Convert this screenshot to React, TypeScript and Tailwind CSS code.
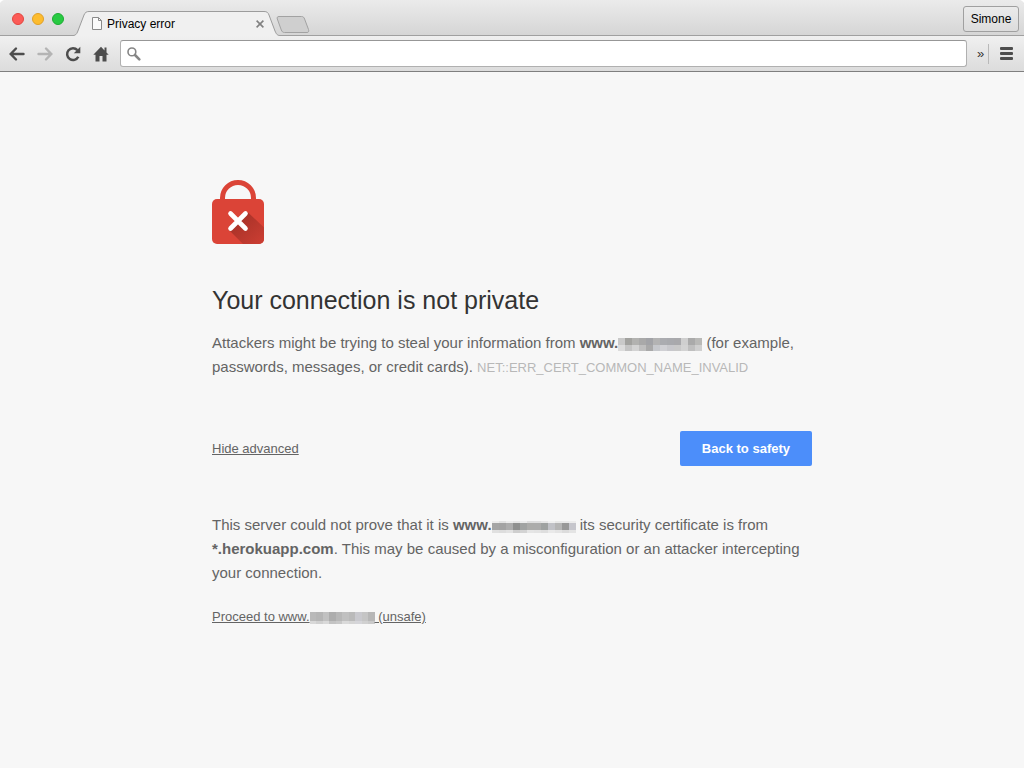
import { clsx } from "clsx";

const trafficLights = [
  { label: "Close window", color: "bg-[#fc5b57] border-[#e2463f]" },
  { label: "Minimize window", color: "bg-[#fdbc2e] border-[#e0a028]" },
  { label: "Zoom window", color: "bg-[#28ca42] border-[#1dab33]" },
];

// Rows of grey blocks that cover the host names
const attackMosaic = [
  { height: "h-[7px]", cells: ["#c9c9c9", "#a2a29f", "#b2b2b0", "#a9a9a9", "#a2a3a7", "#b3b3b3", "#abacb0", "#a9aaae", "#a9a9ac", "#cfcfcf", "#aaaaaa", "#b9b9b7"] },
  { height: "h-[6px]", cells: ["#dcdcdc", "#c4c4c4", "#d3d3d3", "#bfbfbf", "#a9a9a9", "#c6c8cc", "#d0d0d4", "#c8c8cc", "#c9c9c9", "#d3d3d3", "#bfbfbf", "#cfcfcf"] },
];
const serverMosaic = [
  { height: "h-[2px]", cells: ["#ececec", "#e2e2e2", "#ececec", "#e6e6e6", "#ececec", "#dedede", "#dfdfdf", "#e6e6e6", "#f0f0f0", "#e8e8e8", "#e9e9e9", "#ececec"] },
  { height: "h-[7px]", cells: ["#a5a5a5", "#a3a3a3", "#adadad", "#8f908f", "#a1a3a2", "#acacaa", "#acacab", "#9fa2a1", "#c1c2c7", "#b5b5b5", "#989898", "#c6c6cc"] },
  { height: "h-[3px]", cells: ["#e0e0e0", "#dddddd", "#e2e2e2", "#cecece", "#d3d3d3", "#e5e5e5", "#e3e3e3", "#dedede", "#e9e9e9", "#e4e4e4", "#dcdcdc", "#e4e4e4"] },
];
const proceedMosaic = [
  { height: "h-[9px]", cells: ["#b9b9b9", "#b5b5b5", "#c1c1c1", "#adadad", "#b7b7b7", "#c0c0c0", "#bababa", "#c9c9ce", "#c5c5c5", "#b7b7b7"] },
  { height: "h-[3px]", cells: ["#d8d8d8", "#d0d0d0", "#d9d9d9", "#c3c3c3", "#c8c8c8", "#dadada", "#d5d5d5", "#d5d5d9", "#d0d0d0", "#cacaca"] },
];

type MosaicRow = { height: string; cells: string[] };

function Redacted({ rows, className }: { rows: MosaicRow[]; className: string }) {
  return (
    <span className={clsx("inline-flex flex-col align-text-bottom", className)} role="img" aria-label="hidden host name">
      {rows.map((row, index) => (
        <span key={index} className={clsx("flex", row.height)}>
          {row.cells.map((color, cell) => (
            <span key={cell} className="flex-1" style={{ backgroundColor: color }} />
          ))}
        </span>
      ))}
    </span>
  );
}

function ActiveTab() {
  return (
    <div className="relative w-[206px] h-[25px] pl-[17px] pr-[14px] flex items-center">
      <svg className="absolute inset-0 w-full h-full" viewBox="0 0 206 25" preserveAspectRatio="none" aria-hidden="true">
        <path d="M-1 24.5C1.5 24.5 2.5 23.2 3.500 21L10 4C11 1.500 12.500 .5 15 .5H190C193 .5 194 1.500 195 4L201 20C202.500 23.500 203.500 24.500 206 24.500V25H0Z" fill="#f0f0f0" />
        <path d="M-1 24.5C1.5 24.5 2.5 23.2 3.500 21L10 4C11 1.500 12.500 .5 15 .5H190C193 .5 194 1.500 195 4L201 20C202.500 23.500 203.500 24.500 206 24.500" fill="none" stroke="#9c9c9c" />
      </svg>
      <svg className="relative w-3 h-[15px]" viewBox="0 0 12 15" aria-hidden="true">
        <path d="M1.500 1.500H7.500L10.500 4.500V13.500H1.500Z" fill="#fafafa" stroke="#8a8a8a" />
        <path d="M7.500 1.500V4.500H10.500" fill="none" stroke="#8a8a8a" />
      </svg>
      <span className="relative flex-1 ml-1 text-xs text-black">Privacy error</span>
      <button className="relative w-3 h-3 flex items-center justify-center" aria-label="Close tab">
        <svg className="w-2 h-2" viewBox="0 0 8 8" stroke="#808080" strokeWidth="1.600">
          <path d="M.6 .6L7.400 7.400M7.400 .6L.6 7.400" />
        </svg>
      </button>
    </div>
  );
}

function TabStrip() {
  return (
    <div className="h-9 pl-3 pr-[5px] flex items-end rounded-t-[5px] bg-gradient-to-b from-[#ebebeb] to-[#d5d5d5] shadow-[inset_0_-1px_0_#a0a0a0]">
      <div className="h-full w-[62px] pt-[13px] flex gap-2">
        {trafficLights.map((light) => (
          <button key={light.label} aria-label={light.label} className={clsx("w-3 h-3 rounded-full border", light.color)} />
        ))}
      </div>
      <ActiveTab />
      <button className="-ml-1 mb-[3px] w-[34px] h-[17px]" aria-label="New tab">
        <svg className="w-full h-full" viewBox="0 0 34 17">
          <path d="M3 .5H25.500C27.500 .5 28 1.500 28.600 3L32.500 13.500C33.200 15.500 32.500 16.500 31 16.500H8.500C6.500 16.500 6 15.500 5.300 14L1.300 3C.8 1.500 1.300 .5 3 .5Z" fill="#cfcfcf" stroke="#a2a2a2" />
        </svg>
      </button>
      <button className="ml-auto mb-1 h-[26px] w-14 rounded-[3px] border border-[#a0a0a0] bg-gradient-to-b from-[#ebebeb] to-[#dcdcdc] text-xs text-black">
        Simone
      </button>
    </div>
  );
}

function Toolbar() {
  return (
    <div className="h-9 px-[9px] flex items-center bg-gradient-to-b from-[#f0f0f0] to-[#dcdcdc] border-b border-[#7f7f7f]">
      <div className="flex gap-3">
        <button aria-label="Back">
          <svg className="w-4 h-4" viewBox="0 0 16 16" fill="none" stroke="#4d4d4d" strokeWidth="2.400" strokeLinecap="round">
            <path d="M7 2.500L1.700 8L7 13.500M2.500 8H14.500" />
          </svg>
        </button>
        <button aria-label="Forward" disabled>
          <svg className="w-4 h-4" viewBox="0 0 16 16" fill="none" stroke="#b4b4b4" strokeWidth="2.400" strokeLinecap="round">
            <path d="M9 2.500L14.300 8L9 13.500M13.500 8H1.500" />
          </svg>
        </button>
        <button aria-label="Reload">
          <svg className="w-4 h-4" viewBox="0 0 16 16">
            <path d="M12.400 4.200A5.900 5.900 0 1 0 13.300 10.800" fill="none" stroke="#4d4d4d" strokeWidth="2.500" />
            <path d="M15.300 .8V7.300H8.800Z" fill="#4d4d4d" />
          </svg>
        </button>
        <button aria-label="Home">
          <svg className="w-4 h-4" viewBox="0 0 16 16" fill="#4d4d4d">
            <path d="M8 .8L.3 8.800H2.500V15.500H6.500V10H9.500V15.500H13.500V8.800H15.700L13.500 6.500V1.500H11.500V4.400Z" />
          </svg>
        </button>
      </div>
      <label className="ml-[11px] flex-1 h-[27px] px-[6px] flex items-center gap-2 bg-white rounded-[3px] border border-[#b0b0b0] border-t-[#979797]">
        <svg className="w-[14px] h-[14px]" viewBox="0 0 14 14" fill="none" stroke="#858585" aria-hidden="true">
          <circle cx="4.900" cy="4.900" r="3.900" strokeWidth="1.600" />
          <path d="M8 8L12.300 12.300" strokeWidth="2.600" strokeLinecap="round" />
        </svg>
        <input type="text" aria-label="Address" className="flex-1 min-w-0 text-sm outline-none" />
      </label>
      <button className="ml-[10px] w-3 h-5 border-r border-[#b9b9b9] text-left text-[13px] leading-[18px] text-[#333]" aria-label="More">
        »
      </button>
      <button className="ml-[11px] w-[15px] flex flex-col gap-[2px]" aria-label="Menu">
        <span className="w-[13px] h-[3px] rounded-[1px] bg-[#4d4d4d]" />
        <span className="w-[13px] h-[3px] rounded-[1px] bg-[#4d4d4d]" />
        <span className="w-[13px] h-[3px] rounded-[1px] bg-[#4d4d4d]" />
      </button>
    </div>
  );
}

function BrokenLock() {
  return (
    <svg className="w-[52px] h-16" viewBox="0 0 52 64" aria-hidden="true">
      <defs>
        <linearGradient id="lock-shadow" x1="26" y1="38" x2="48" y2="62" gradientUnits="userSpaceOnUse">
          <stop offset="0" stopColor="#a83228" />
          <stop offset="1" stopColor="#c93d32" />
        </linearGradient>
      </defs>
      <path d="M10.500 22V18A15.500 15.500 0 0 1 41.500 18V22" fill="none" stroke="#db4437" strokeWidth="5" />
      <rect y="19" width="52" height="45" rx="5" fill="#db4437" />
      <path d="M35.500 32L52 47.500V59A5 5 0 0 1 47 64H31L17 50L26 41Z" fill="url(#lock-shadow)" />
      <path d="M18.500 33.500L33.500 48.500M33.500 33.500L18.500 48.500" stroke="#fff" strokeWidth="4.600" strokeLinecap="round" />
    </svg>
  );
}

export default function App() {
  return (
    <div className="min-h-screen rounded-t-[5px] bg-[#f7f7f7] font-['Liberation_Sans',Arial,sans-serif]">
      <header>
        <TabStrip />
        <Toolbar />
      </header>
      <main className="w-full max-w-[600px] mx-auto pt-[108px] text-[15px] leading-6 text-[#646464]">
        <BrokenLock />
        <h1 className="mt-10 text-[25px] leading-8 text-[#333]">Your connection is not private</h1>
        <p className="mt-[15px]">
          Attackers might be trying to steal your information from <strong>www.</strong>
          <Redacted rows={attackMosaic} className="w-[84px]" /> (for example, passwords, messages, or credit cards).{" "}
          <span className="text-[13px] text-[#b8b8b8]">NET::ERR_CERT_COMMON_NAME_INVALID</span>
        </p>
        <div className="mt-[51px] flex items-center justify-between">
          <button className="text-[13px] underline">Hide advanced</button>
          <button className="h-[35px] px-[22px] rounded-[2px] bg-[#4c8efa] text-[13px] font-bold text-white">Back to safety</button>
        </div>
        <p className="mt-[47px]">
          This server could not prove that it is <strong>www.</strong>
          <Redacted rows={serverMosaic} className="w-[84px]" /> its security certificate is from{" "}
          <strong>*.herokuapp.com</strong>. This may be caused by a misconfiguration or an attacker intercepting your
          connection.
        </p>
        <a href="#proceed" className="mt-5 inline-block text-[13px] underline">
          Proceed to www.
          <Redacted rows={proceedMosaic} className="w-[65px]" /> (unsafe)
        </a>
      </main>
    </div>
  );
}
